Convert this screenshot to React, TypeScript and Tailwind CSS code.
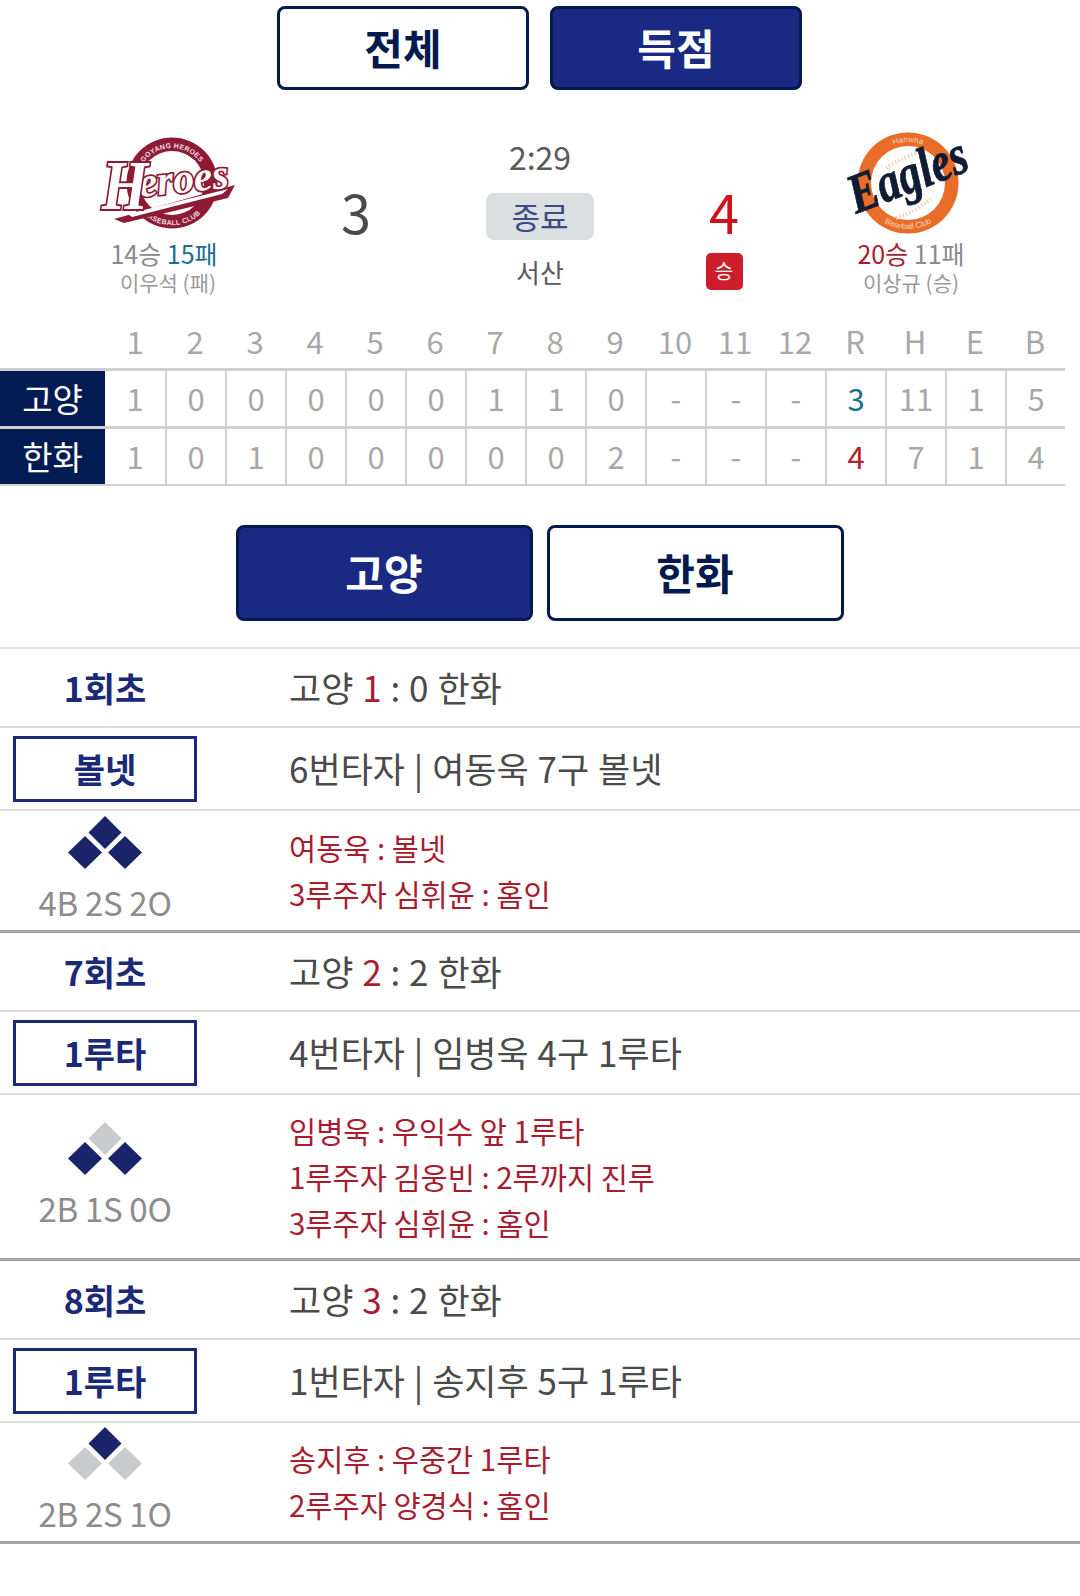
import React from 'react';

const FONT = "font-['Noto_Sans_CJK_KR','Noto_Sans',sans-serif]";

type Play = {
  inning: string;
  score: number;
  away: number;
  badge: string;
  batter: string;
  bases: [boolean, boolean, boolean];
  count: string;
  details: string[];
  detailHeight: string;
};

const plays: Play[] = [
  {
    inning: '1회초',
    score: 1,
    away: 0,
    badge: '볼넷',
    batter: '6번타자 | 여동욱 7구 볼넷',
    bases: [true, true, true],
    count: '4B 2S 2O',
    details: ['여동욱 : 볼넷', '3루주자 심휘윤 : 홈인'],
    detailHeight: 'h-[119px]',
  },
  {
    inning: '7회초',
    score: 2,
    away: 2,
    badge: '1루타',
    batter: '4번타자 | 임병욱 4구 1루타',
    bases: [false, true, true],
    count: '2B 1S 0O',
    details: ['임병욱 : 우익수 앞 1루타', '1루주자 김웅빈 : 2루까지 진루', '3루주자 심휘윤 : 홈인'],
    detailHeight: 'h-[163px]',
  },
  {
    inning: '8회초',
    score: 3,
    away: 2,
    badge: '1루타',
    batter: '1번타자 | 송지후 5구 1루타',
    bases: [true, false, false],
    count: '2B 2S 1O',
    details: ['송지후 : 우중간 1루타', '2루주자 양경식 : 홈인'],
    detailHeight: 'h-[118px]',
  },
];

const innings = ['1', '2', '3', '4', '5', '6', '7', '8', '9', '10', '11', '12', 'R', 'H', 'E', 'B'];
const goyang = ['1', '0', '0', '0', '0', '0', '1', '1', '0', '-', '-', '-', '3', '11', '1', '5'];
const hanwha = ['1', '0', '1', '0', '0', '0', '0', '0', '2', '-', '-', '-', '4', '7', '1', '4'];

// Top / left / right diamonds, [top, left, right] = lit or not
const Bases = ({ bases }: { bases: [boolean, boolean, boolean] }) => {
  const fill = (on: boolean) => (on ? '#1a2468' : '#c8cacc');
  return (
    <svg width="74" height="53" viewBox="0 0 74 53" className="block">
      <polygon points="37,0 53.5,16.5 37,33 20.5,16.5" fill={fill(bases[0])} />
      <polygon points="17,20 34,36.5 17,53 0,36.5" fill={fill(bases[1])} />
      <polygon points="57,20 74,36.5 57,53 40,36.5" fill={fill(bases[2])} />
    </svg>
  );
};

const HeroesLogo = () => (
  <svg width="136" height="92" viewBox="0 0 136 92" className="block overflow-visible">
    <defs>
      <path id="heroesTop" d="M 40.3 31.2 A 35 35 0 0 1 103.7 31.2" />
      <path id="heroesBottom" d="M 34.1 64.2 A 42 42 0 0 0 109.9 64.2" />
    </defs>
    <circle cx="72" cy="46" r="45.5" fill="#8e1b34" />
    <circle cx="72" cy="46" r="32" fill="#ffffff" />
    <text fontFamily="Liberation Sans" fontSize="7" fontWeight="700" fill="#f3dfe2" textAnchor="middle" letterSpacing="0.3">
      <textPath href="#heroesTop" startOffset="50%">GOYANG HEROES</textPath>
    </text>
    <text fontFamily="Liberation Sans" fontSize="7" fontWeight="700" fill="#f3dfe2" textAnchor="middle" letterSpacing="0.3">
      <textPath href="#heroesBottom" startOffset="50%">BASEBALL CLUB</textPath>
    </text>
    {/* swoosh under the wordmark */}
    <polygon points="14,82 135,48 128,61 24,86" fill="#8e1b34" />
    <polygon points="28,77 128,52 122,57 32,80" fill="#ffffff" />
    <text x="40" y="60" fontFamily="Liberation Serif" fontSize="42" fontStyle="italic" fontWeight="700" fill="#ffffff" stroke="#8e1b34" strokeWidth="3.5" paintOrder="stroke" textLength="90" lengthAdjust="spacingAndGlyphs" transform="rotate(-6 40 60)">eroes</text>
    <text x="2" y="72" fontFamily="Liberation Serif" fontSize="70" fontStyle="italic" fontWeight="700" fill="#ffffff" stroke="#8e1b34" strokeWidth="4" paintOrder="stroke" textLength="46" lengthAdjust="spacingAndGlyphs">H</text>
  </svg>
);

const EaglesLogo = () => (
  <svg width="122" height="102" viewBox="0 0 122 102" className="block overflow-visible">
    <defs>
      <path id="eaglesTop" d="M 23.4 30 A 40 40 0 0 1 92.6 30" />
      <path id="eaglesBottom" d="M 17.3 73.5 A 47 47 0 0 0 98.7 73.5" />
    </defs>
    <circle cx="58" cy="51" r="50.5" fill="#e96c28" />
    <circle cx="58" cy="51" r="37" fill="#ffffff" />
    <text fontFamily="Liberation Sans" fontSize="8" fill="#f9d7bf" textAnchor="middle">
      <textPath href="#eaglesTop" startOffset="50%">Hanwha</textPath>
    </text>
    <text fontFamily="Liberation Sans" fontSize="8" fill="#f9d7bf" textAnchor="middle">
      <textPath href="#eaglesBottom" startOffset="50%">Baseball Club</textPath>
    </text>
    {/* ball stitches */}
    <path d="M36 36 C48 28 62 22 74 18" fill="none" stroke="#ecd3bf" strokeWidth="4" strokeDasharray="1.5 2" />
    <path d="M46 86 C60 82 72 74 82 66" fill="none" stroke="#ecd3bf" strokeWidth="4" strokeDasharray="1.5 2" />
    <text x="6" y="82" fontFamily="Liberation Serif" fontSize="56" fontStyle="italic" fontWeight="700" fill="#0f1c33" stroke="#0f1c33" strokeWidth="0.8" textLength="124" lengthAdjust="spacingAndGlyphs" transform="rotate(-21 6 82)">Eagles</text>
  </svg>
);

const ScoreCell = ({ value, index, first }: { value: string; index: number; first: boolean }) => {
  let color = 'text-[#a8a8a8]';
  if (index === 12) color = value === '3' ? 'text-[#1c6f8f]' : 'text-[#b3202f]';
  return (
    <div className={`flex h-full w-[60px] items-center justify-center text-[31px] ${color} ${first ? '' : 'border-l-2 border-[#d0d0d0]'}`}>
      {value}
    </div>
  );
};

const LineRow = ({ name, values }: { name: string; values: string[] }) => (
  <div className="flex h-[55px]">
    <div className="flex h-full w-[105px] items-center justify-center bg-[#021b52] text-[33px] text-white">{name}</div>
    {values.map((value, index) => (
      <ScoreCell key={index} value={value} index={index} first={index === 0} />
    ))}
  </div>
);

const PlayBlock = ({ play }: { play: Play }) => (
  <div className="border-b-[3px] border-[#a6a6a6]">
    <div className="flex h-[79px] items-center border-b-2 border-[#dcdcdc]">
      <div className="w-[210px] text-center text-[34px] font-bold text-[#1a2a78]">{play.inning}</div>
      <div className="pl-[79px] text-[35px] text-[#4a4a4a] [word-spacing:1px]">
        고양 <span className="text-[#a81c30]">{play.score}</span> : {play.away} 한화
      </div>
    </div>
    <div className="flex h-[83px] items-center border-b-2 border-[#dcdcdc]">
      <div className="flex w-[210px] justify-center">
        <div className="flex h-[66px] w-[184px] items-center justify-center border-[3px] border-[#1a2a78] text-[34px] font-bold text-[#1a2a78]">
          {play.badge}
        </div>
      </div>
      <div className="pl-[79px] text-[35px] text-[#4a4a4a] [word-spacing:1px]">{play.batter}</div>
    </div>
    <div className={`flex items-center ${play.detailHeight}`}>
      <div className="flex w-[210px] flex-col items-center pb-[2px]">
        <Bases bases={play.bases} />
        <div className="mt-[11px] text-[33px] leading-[44px] tracking-[-0.3px] text-[#8c8c8c]">{play.count}</div>
      </div>
      <div className="flex flex-col pb-[2px] pl-[79px]">
        {play.details.map((line) => (
          <div key={line} className="text-[29.5px] leading-[46px] text-[#a81c30]">{line}</div>
        ))}
      </div>
    </div>
  </div>
);

const App: React.FC = () => {
  return (
    <div className={`h-[1596px] w-[1080px] overflow-hidden bg-white ${FONT}`}>
      {/* Tabs */}
      <div className="flex w-[1079px] justify-center gap-[21px] pt-[6px]">
        <button className="flex h-[84px] w-[252px] items-center justify-center rounded-[8px] border-[3px] border-[#031a4f] bg-white pb-[3px] text-[42px] font-bold text-[#031a4f]">전체</button>
        <button className="flex h-[84px] w-[252px] items-center justify-center rounded-[8px] border-[3px] border-[#031a4f] bg-[#1a2a82] pb-[3px] text-[42px] font-bold text-white">득점</button>
      </div>

      {/* Game summary */}
      <div className="flex h-[226px] w-[1078px]">
        <div className="flex w-[336px] flex-col items-center">
          <div className="mt-[47px]"><HeroesLogo /></div>
          <div className="mt-[8px] mr-[8px] text-[25px] leading-[32px] text-[#8a8a8a]">14승 <span className="text-[#1c6f8f]">15패</span></div>
          <div className="text-[21px] leading-[27px] text-[#9a9a9a]">이우석 (패)</div>
        </div>
        <div className="flex w-[40px] flex-col items-center pt-[88px] text-[54px] leading-[66px] text-[#4a4a4a]">3</div>
        <div className="flex w-[328px] flex-col items-center">
          <div className="mt-[46px] text-[32px] leading-[40px] text-[#5a5a5a]">2:29</div>
          <div className="mt-[17px] flex h-[47px] w-[108px] items-center justify-center rounded-[8px] bg-[#dcdfe0] text-[31px] text-[#3b4a80]">종료</div>
          <div className="mt-[13px] text-[26px] leading-[38px] text-[#5a5a5a]">서산</div>
        </div>
        <div className="flex w-[40px] flex-col items-center">
          <div className="mt-[88px] text-[54px] leading-[66px] text-[#d0101c]">4</div>
          <div className="mt-[9px] flex h-[37px] w-[37px] shrink-0 items-center justify-center rounded-[5px] bg-[#cc1f2b] pb-[1px] text-[20px] text-white">승</div>
        </div>
        <div className="flex w-[334px] flex-col items-center">
          <div className="mt-[42px]"><EaglesLogo /></div>
          <div className="mt-[3px] text-[25px] leading-[32px] text-[#8a8a8a]"><span className="text-[#a81c30]">20승</span> 11패</div>
          <div className="text-[21px] leading-[27px] text-[#9a9a9a]">이상규 (승)</div>
        </div>
      </div>

      {/* Line score */}
      <div className="w-[1065px]">
        <div className="flex h-[52px] pl-[105px]">
          {innings.map((label) => (
            <div key={label} className="flex w-[60px] items-center justify-center pb-[2px] text-[31px] text-[#a8a8a8]">{label}</div>
          ))}
        </div>
        <div className="border-y-[3px] border-[#d0d0d0]">
          <LineRow name="고양" values={goyang} />
        </div>
        <div className="border-b-2 border-[#d0d0d0]">
          <LineRow name="한화" values={hanwha} />
        </div>
      </div>

      {/* Team tabs */}
      <div className="mt-[39px] flex w-[1079px] justify-center gap-[14px]">
        <button className="flex h-[96px] w-[297px] items-center justify-center rounded-[8px] border-[3px] border-[#031a4f] bg-[#1a2a82] pb-[3px] text-[42px] font-bold text-white">고양</button>
        <button className="flex h-[96px] w-[297px] items-center justify-center rounded-[8px] border-[3px] border-[#031a4f] bg-white pb-[3px] text-[42px] font-bold text-[#031a4f]">한화</button>
      </div>

      {/* Scoring plays */}
      <div className="mt-[26px] border-t-2 border-[#dcdcdc]">
        {plays.map((play) => (
          <PlayBlock key={play.inning} play={play} />
        ))}
      </div>
    </div>
  );
};

export default App;
